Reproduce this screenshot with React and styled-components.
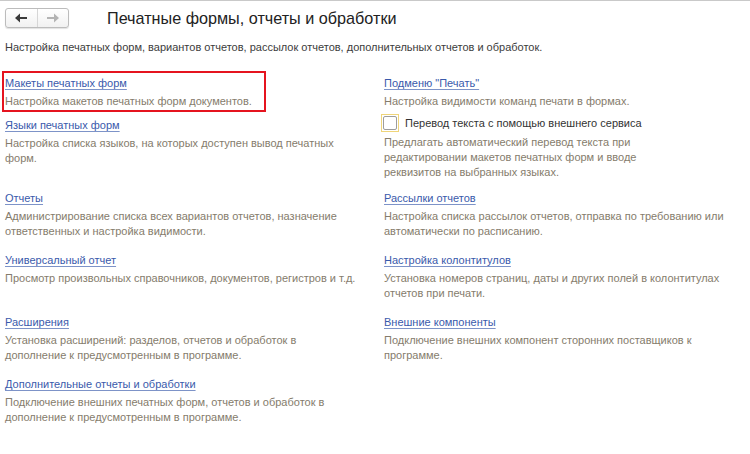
import React from "react"
import styled, { createGlobalStyle } from "styled-components"

const GlobalStyle = createGlobalStyle`
  html, body {
    margin: 0;
    padding: 0;
    background: #fff;
  }
  body {
    font-family: "Liberation Sans", Arial, sans-serif;
    font-size: 11px;
    color: #333;
  }
`

const leftItems = [
  [
    {
      title: "Макеты печатных форм",
      text: "Настройка макетов печатных форм документов.",
      marked: true,
    },
    {
      title: "Языки печатных форм",
      text: "Настройка списка языков, на которых доступен вывод печатных форм.",
    },
  ],
  [
    {
      title: "Отчеты",
      text: "Администрирование списка всех вариантов отчетов, назначение ответственных и настройка видимости.",
    },
  ],
  [
    {
      title: "Универсальный отчет",
      text: "Просмотр произвольных справочников, документов, регистров и т.д.",
    },
  ],
  [
    {
      title: "Расширения",
      text: "Установка расширений: разделов, отчетов и обработок в дополнение к предусмотренным в программе.",
    },
  ],
  [
    {
      title: "Дополнительные отчеты и обработки",
      text: "Подключение внешних печатных форм, отчетов и обработок в дополнение к предусмотренным в программе.",
    },
  ],
]

const rightItems = [
  [
    {
      title: "Подменю \"Печать\"",
      text: "Настройка видимости команд печати в формах.",
    },
  ],
  [
    {
      title: "Рассылки отчетов",
      text: "Настройка списка рассылок отчетов, отправка по требованию или автоматически по расписанию.",
    },
  ],
  [
    {
      title: "Настройка колонтитулов",
      text: "Установка номеров страниц, даты и других полей в колонтитулах отчетов при печати.",
    },
  ],
  [
    {
      title: "Внешние компоненты",
      text: "Подключение внешних компонент сторонних поставщиков к программе.",
    },
  ],
]

function Arrow({ dir, color }) {
  return (
    <svg width="12" height="10" viewBox="0 0 12 10">
      <g
        transform={dir === "right" ? "translate(12 0) scale(-1 1)" : undefined}
        fill={color}
      >
        <rect x="3" y="4" width="9" height="2" />
        <polygon points="0,5 5,0.5 5,9.5" />
      </g>
    </svg>
  )
}

function Entry({ item }) {
  return (
    <Block marked={item.marked}>
      <Link href="#">{item.title}</Link>
      <Desc>{item.text}</Desc>
    </Block>
  )
}

const App = () => {
  return (
    <Page>
      <GlobalStyle />
      <Header>
        <NavGroup>
          <NavButton>
            <Arrow dir="left" color="#3a3a3a" />
          </NavButton>
          <NavButton>
            <Arrow dir="right" color="#b4b4b4" />
          </NavButton>
        </NavGroup>
        <Title>Печатные формы, отчеты и обработки</Title>
      </Header>
      <Subtitle>
        Настройка печатных форм, вариантов отчетов, рассылок отчетов,
        дополнительных отчетов и обработок.
      </Subtitle>
      <Grid>
        {leftItems.map((cell, i) => (
          <Cell key={"l" + i} col={1} row={i + 1} first={i === 0}>
            {cell.map((item) => (
              <Entry key={item.title} item={item} />
            ))}
          </Cell>
        ))}
        {rightItems.map((cell, i) => (
          <Cell key={"r" + i} col={2} row={i + 1} first={i === 0}>
            {cell.map((item) => (
              <Entry key={item.title} item={item} />
            ))}
            {i === 0 && (
              <>
                <CheckRow>
                  <CheckFocus>
                    <CheckBox />
                  </CheckFocus>
                  <CheckLabel>Перевод текста с помощью внешнего сервиса</CheckLabel>
                </CheckRow>
                <CheckDesc>
                  Предлагать автоматический перевод текста при редактировании
                  макетов печатных форм и вводе реквизитов на выбранных языках.
                </CheckDesc>
              </>
            )}
          </Cell>
        ))}
      </Grid>
    </Page>
  )
}

const Page = styled.div`
  width: 750px;
  height: 454px;
  box-sizing: border-box;
  border-top: 1px solid #c9c9c9;
  padding: 7px 0 0 5px;
  overflow: hidden;
`

const Header = styled.div`
  display: flex;
  align-items: center;
  height: 20px;
`

const NavGroup = styled.div`
  display: flex;
  width: 64px;
  height: 20px;
  box-sizing: border-box;
  border: 1px solid #bcbcbc;
  border-radius: 3px;
  background: linear-gradient(#ffffff, #f1f1f1);
  box-shadow: 0 1px 1px rgba(0, 0, 0, 0.12);
`

const NavButton = styled.div`
  flex: 1;
  display: flex;
  align-items: center;
  justify-content: center;

  & + & {
    border-left: 1px solid #d6d6d6;
  }
`

const Title = styled.h1`
  margin: 0 0 0 38px;
  font-size: 16.2px;
  font-weight: normal;
  color: #222;
  line-height: 20px;
  white-space: nowrap;
`

const Subtitle = styled.p`
  margin: 12px 0 0;
  line-height: 15px;
  color: #3c3c3c;
`

const Grid = styled.div`
  display: grid;
  grid-template-columns: 353px 1fr;
  column-gap: 26px;
  margin-top: 19px;
`

const Cell = styled.div`
  grid-column: ${(p) => p.col};
  grid-row: ${(p) => p.row};
  padding-bottom: ${(p) => (p.first ? 9 : 12)}px;
  display: flex;
  flex-direction: column;
  align-items: flex-start;
`

const Block = styled.div`
  width: ${(p) => (p.marked ? "258px" : "auto")};
  outline: ${(p) => (p.marked ? "2px solid #e5141f" : "none")};
  outline-offset: 1px;

  & + & {
    margin-top: 7px;
  }
`

const Link = styled.a`
  display: block;
  line-height: 18px;
  color: #3a5aab;
  text-decoration: underline;
  text-underline-offset: 2px;
  text-decoration-color: #7d93c8;
`

const Desc = styled.div`
  margin-top: 2px;
  line-height: 15px;
  color: #857c6c;
`

const CheckRow = styled.div`
  display: flex;
  align-items: center;
  margin: 5px 0 0 -3px;
  height: 18px;
`

const CheckFocus = styled.div`
  width: 18px;
  height: 18px;
  box-sizing: border-box;
  border: 1px solid #efd57a;
  display: flex;
  align-items: center;
  justify-content: center;
`

const CheckBox = styled.div`
  width: 12px;
  height: 12px;
  border: 1px solid #9d9d9d;
  border-radius: 2px;
  background: #fff;
`

const CheckLabel = styled.span`
  margin-left: 6px;
  color: #333;
`

const CheckDesc = styled(Desc)`
  margin-top: 3px;
  max-width: 272px;
`

export default App
